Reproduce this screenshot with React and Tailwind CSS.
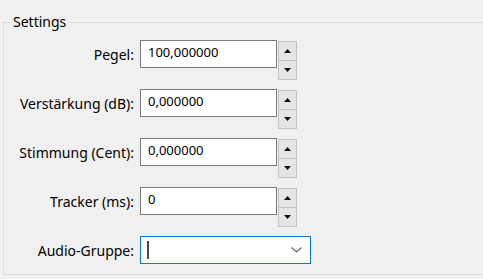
const font = { fontFamily: '"Segoe UI", "Noto Sans", Arial, sans-serif' };

const rows = [
  { label: 'Pegel:', value: '100,000000' },
  { label: 'Verstärkung (dB):', value: '0,000000' },
  { label: 'Stimmung (Cent):', value: '0,000000' },
  { label: 'Tracker (ms):', value: '0' },
];

function SpinButton({ up }) {
  return (
    <div className={`w-[19px] h-[20px] border border-[#c4c4c4] bg-[#e5e5e5] flex items-center justify-center ${up ? '' : '-mt-px'}`}>
      <svg width="7" height="4" viewBox="0 0 7 4">
        {up ? <polygon points="0,4 7,4 3.5,0" fill="#111" /> : <polygon points="0,0 7,0 3.5,4" fill="#111" />}
      </svg>
    </div>
  );
}

function SpinRow({ label, value }) {
  return (
    <div className="h-[49px] flex items-start">
      <div className="w-[130px] h-[28px] pt-[1px] flex items-center justify-end text-[14px] leading-[16px] text-black whitespace-nowrap">{label}</div>
      <div className="ml-[6px] w-[137px] h-[28px] border border-[#7a7a7a] bg-white pl-[7px] pt-[3px] text-[13px] leading-[16px] text-black">
        {value}
      </div>
      <div className="ml-[1px] mt-[1px] flex flex-col">
        <SpinButton up />
        <SpinButton />
      </div>
    </div>
  );
}

export default function App() {
  return (
    <div className="w-[483px] h-[279px] bg-[#f0f0f0] overflow-hidden" style={font}>
      <fieldset className="ml-[3px] mt-[14px] w-[500px] border-l border-t border-b border-[#dcdcdc] pt-[10px] pb-[10px]">
        <legend className="ml-[6px] px-[3px] text-[14px] leading-[16px] text-black">Settings</legend>
        {rows.map((r) => (
          <SpinRow key={r.label} label={r.label} value={r.value} />
        ))}
        <div className="h-[28px] flex items-start">
          <div className="w-[130px] h-[28px] pt-[1px] flex items-center justify-end text-[14px] leading-[16px] text-black whitespace-nowrap">Audio-Gruppe:</div>
          <div className="ml-[6px] w-[171px] h-[28px] border border-[#0078d7] bg-white flex items-center justify-between pl-[6px] pr-[8px]">
            <div className="w-[2px] h-[18px] bg-[#4a4a4a]"></div>
            <svg width="11" height="6" viewBox="0 0 11 6">
              <polyline points="0.5,0.5 5.5,5 10.5,0.5" fill="none" stroke="#6a6a6a" strokeWidth="1.2" />
            </svg>
          </div>
        </div>
      </fieldset>
    </div>
  );
}
